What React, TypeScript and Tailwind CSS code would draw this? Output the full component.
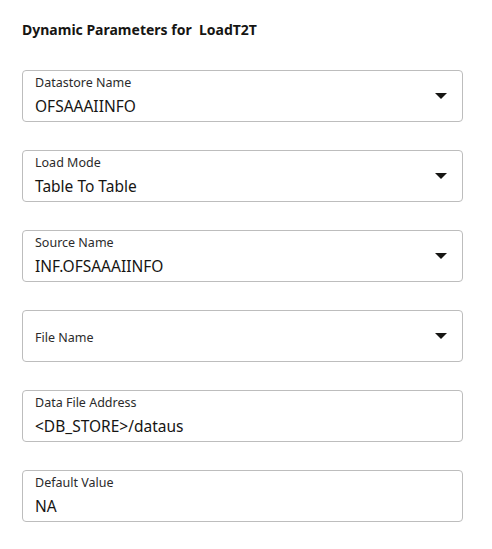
import React from "react";

type Field = {
  label: string;
  value?: string;
  select?: boolean;
};

const fields: Field[] = [
  { label: "Datastore Name", value: "OFSAAAIINFO", select: true },
  { label: "Load Mode", value: "Table To Table", select: true },
  { label: "Source Name", value: "INF.OFSAAAIINFO", select: true },
  { label: "File Name", select: true },
  { label: "Data File Address", value: "<DB_STORE>/dataus" },
  { label: "Default Value", value: "NA" },
];

function Caret() {
  return (
    <svg width="12" height="6" viewBox="0 0 12 6" className="shrink-0">
      <path d="M0 0 H12 L6 6 Z" fill="#161513" />
    </svg>
  );
}

export default function App(): JSX.Element {
  return (
    <div className="bg-white w-[492px] h-[549px] px-[22px] pt-[21px] [font-family:'Noto_Sans','Open_Sans',sans-serif] text-[#161513]">
      {/* Header */}
      <h2 className="text-[14px] font-bold leading-[18px] whitespace-pre">
        Dynamic Parameters for  LoadT2T
      </h2>

      {/* Parameter fields */}
      <div className="mt-[31px] flex flex-col gap-[28px] w-[441px]">
        {fields.map((f) => (
          <div
            key={f.label}
            className="h-[52px] border border-[#bdbdbd] rounded-[4px] flex items-center pl-[12px] pr-[15px]"
          >
            {f.value ? (
              <div className="flex-1 self-stretch flex flex-col pt-[4px] gap-[4px]">
                <div className="text-[12.5px] leading-[16px] text-[#2b2b2b]">
                  {f.label}
                </div>
                <div className="text-[15.5px] leading-[22px] text-[#161513]">
                  {f.value}
                </div>
              </div>
            ) : (
              <div className="flex-1 pt-[3px] text-[12.5px] leading-[16px] text-[#2b2b2b]">
                {f.label}
              </div>
            )}
            {f.select && <Caret />}
          </div>
        ))}
      </div>
    </div>
  );
}
